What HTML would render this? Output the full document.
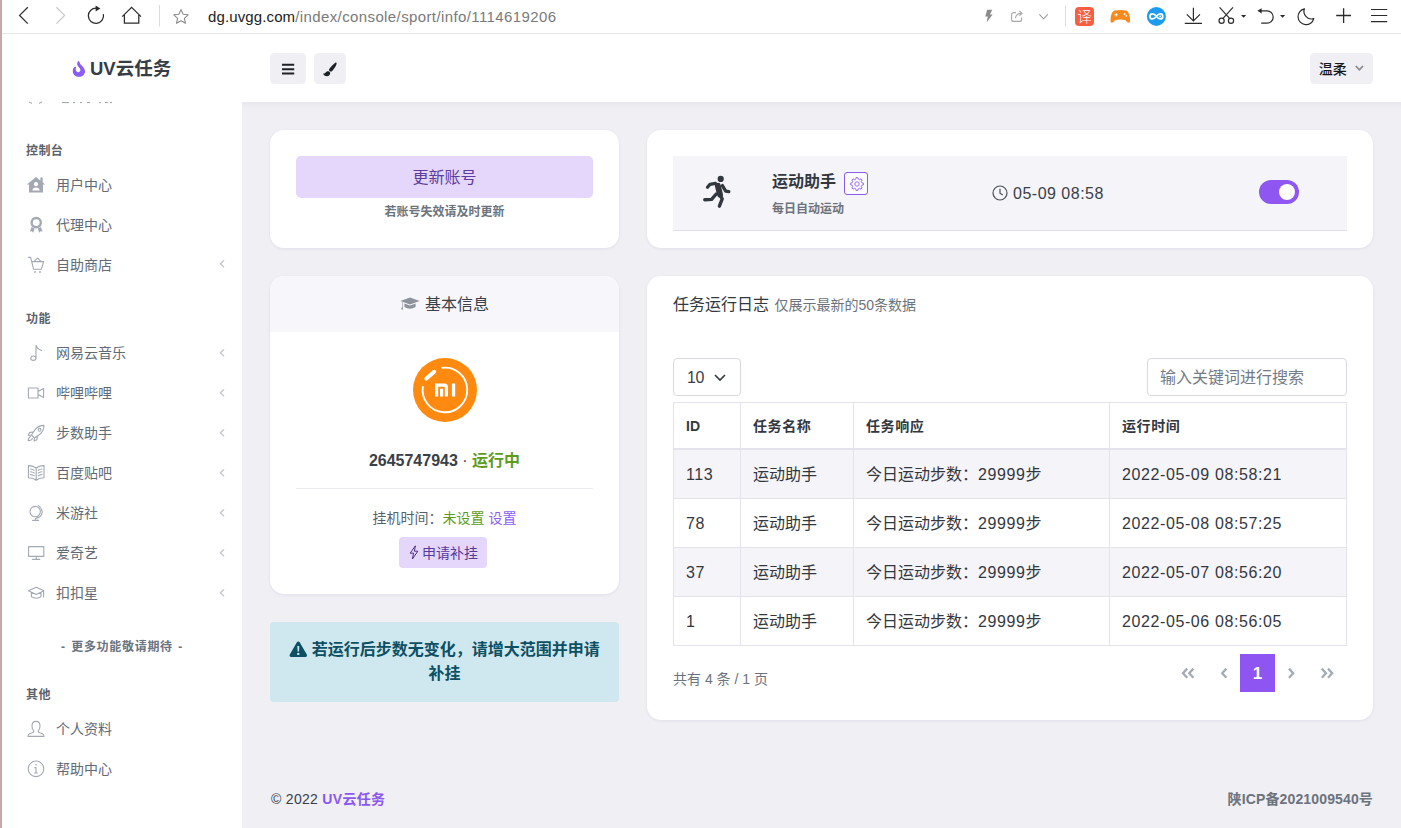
<!DOCTYPE html>
<html lang="zh-CN">
<head>
<meta charset="utf-8">
<title>UV云任务</title>
<style>
*{box-sizing:border-box;margin:0;padding:0}
html,body{width:1401px;height:828px;overflow:hidden;background:#fff}
body{position:relative;font-family:"Liberation Sans","Noto Sans CJK SC",sans-serif;color:#343a40;font-size:14px;line-height:1}
.a{position:absolute;white-space:nowrap}
svg{position:absolute;overflow:visible}
#strip{left:0;top:0;width:2px;height:828px;background:#c9a8a8}
#chrome{left:2px;top:0;width:1399px;height:34px;background:#fff;border-bottom:1px solid #e6e6e6}
#url{left:208px;top:8px;font-size:15px;line-height:18px;color:#7a7a7a;letter-spacing:0}
#url b{font-weight:400;color:#222;letter-spacing:.12px}
#main{left:242px;top:102px;width:1159px;height:726px;background:#f0eff4}
#mainshadow{left:242px;top:102px;width:1159px;height:8px;background:linear-gradient(#e9e8ee,#f0eff4)}
.card{background:#fff;border-radius:14px;box-shadow:0 1px 3px rgba(120,110,160,.12)}
.hbtn{background:#f0eff4;border-radius:4.5px}
.nav{left:56px;font-size:14px;color:#626a76;line-height:20px}
.navh{margin-top:.5px;left:26px;font-size:12px;font-weight:700;color:#5a616b;line-height:16px;letter-spacing:.4px}
.n{letter-spacing:.6px}
</style>
</head>
<body>
<div id="strip" class="a"></div>
<div id="chrome" class="a"></div>
<svg class="a" style="left:0;top:0" width="1401" height="34" viewBox="0 0 1401 34" fill="none" stroke-linecap="butt" stroke-linejoin="miter">
<!-- back -->
<path d="M27.8 7.2 L19.6 15.4 L27.8 23.6" stroke="#2b2b2b" stroke-width="1.25"></path>
<!-- forward -->
<path d="M56.4 7.2 L64.6 15.4 L56.4 23.6" stroke="#c8c8c8" stroke-width="1.25"></path>
<!-- reload -->
<path d="M96.6 8.2 A7.6 7.6 0 1 0 103.4 14.2" stroke="#2b2b2b" stroke-width="1.25"></path>
<path d="M95.6 5.6 L100.4 8.6 L95.6 11.4 Z" fill="#2b2b2b" stroke="none"></path>
<!-- home -->
<path d="M122.2 16.6 L131.6 7.4 L141 16.6 M124.4 15 V23.2 H138.8 V15" stroke="#2b2b2b" stroke-width="1.25"></path>
<!-- sep -->
<path d="M159.5 5 V26.5" stroke="#dcdcdc" stroke-width="1"></path>
<!-- star -->
<path d="M181 9.6 L183.1 14.3 L188.2 14.8 L184.4 18.3 L185.5 23.3 L181 20.7 L176.5 23.3 L177.6 18.3 L173.8 14.8 L178.9 14.3 Z" stroke="#8a8a8a" stroke-width="1.1" stroke-linejoin="round"></path>
<!-- lightning -->
<path d="M987.2 9.8 H992.2 L990 14.4 H992.6 L986.6 22.4 L987.8 16.4 H985.2 Z" fill="#8c8c8c" stroke="none"></path>
<!-- share -->
<path d="M1016 12.6 H1013.6 Q1011.6 12.6 1011.6 14.6 V19.4 Q1011.6 21.4 1013.6 21.4 H1019.6 Q1021.6 21.4 1021.6 19.4 V17.6" stroke="#a8a8a8" stroke-width="1.1"></path>
<path d="M1015.4 18.2 Q1015.8 13.6 1021.6 13.4 M1019.4 11 L1022 13.4 L1019.4 15.8" stroke="#a8a8a8" stroke-width="1.1"></path>
<!-- chevron down -->
<path d="M1039.4 14.4 L1043.6 18.8 L1047.8 14.4" stroke="#9a9a9a" stroke-width="1.1"></path>
<!-- sep -->
<path d="M1065.5 5.2 V26.8" stroke="#dcdcdc" stroke-width="1"></path>
<!-- translate -->
<rect x="1075" y="7" width="19" height="19" rx="4" fill="#f85f42" stroke="none"></rect>
<!-- gamepad -->
<path d="M1114.6 10.6 Q1120.4 9.4 1126 10.6 Q1128.8 11.4 1129.8 17 Q1130.6 22 1129.4 22.6 Q1127.6 23.2 1125.6 20.2 Q1120.4 19 1115 20.2 Q1113 23.2 1111.2 22.6 Q1110 22 1110.8 17 Q1111.8 11.4 1114.6 10.6 Z" fill="#f68a1e" stroke="none"></path>
<circle cx="1124.6" cy="14" r="0.9" fill="#fff" stroke="none"></circle><circle cx="1126.4" cy="15.8" r="0.9" fill="#fff" stroke="none"></circle>
<path d="M1114.6 14.8 H1117.8 M1116.2 13.2 V16.4" stroke="#fff" stroke-width="1"></path>
<!-- blue circle -->
<circle cx="1156.4" cy="16.4" r="9.5" fill="#1c9bf0" stroke="none"></circle>
<path d="M1156.4 16.4 C1154.2 13 1150 13 1150 16.4 C1150 19.8 1154.2 19.8 1156.4 16.4 C1158.6 13 1162.8 13 1162.8 16.4 C1162.8 19.8 1158.6 19.8 1156.4 16.4 Z" stroke="#fff" stroke-width="1.7"></path><circle cx="1160.2" cy="16.4" r="0.9" fill="#fff" stroke="none"></circle>
<!-- download -->
<path d="M1193.4 7.8 V21 M1186.8 14.4 L1193.4 21 L1200 14.4 M1184.8 23.3 H1202" stroke="#2b2b2b" stroke-width="1.2"></path>
<!-- scissors -->
<path d="M1219.6 7.4 L1229.8 18.6 M1233 7.4 L1222.8 18.6" stroke="#2b2b2b" stroke-width="1.2"></path>
<circle cx="1221.6" cy="20.7" r="2.6" stroke="#2b2b2b" stroke-width="1.2"></circle>
<circle cx="1231" cy="20.7" r="2.6" stroke="#2b2b2b" stroke-width="1.2"></circle>
<path d="M1241 15 H1246.2 L1243.6 17.8 Z" fill="#2b2b2b" stroke="none"></path>
<!-- undo -->
<path d="M1260 10.8 H1267 A6.2 6.2 0 0 1 1267 23.2 H1261.2" stroke="#2b2b2b" stroke-width="1.2"></path>
<path d="M1257.4 10.8 L1261.6 8.2 V13.4 Z" fill="#2b2b2b" stroke="none"></path>
<path d="M1280 15 H1285.2 L1282.6 17.8 Z" fill="#2b2b2b" stroke="none"></path>
<!-- moon -->
<path d="M1304.4 8.8 A8 8 0 1 0 1313.8 18.6 A7.6 7.6 0 0 1 1304.4 8.8 Z" stroke="#2b2b2b" stroke-width="1.2" stroke-linejoin="round"></path>
<!-- plus -->
<path d="M1343.6 8.2 V22.9 M1336.2 15.5 H1351" stroke="#2b2b2b" stroke-width="1.3"></path>
<!-- menu -->
<path d="M1371 9.5 H1387.2 M1371 15.5 H1387.2 M1371 21.6 H1387.2" stroke="#2b2b2b" stroke-width="1.2"></path>
</svg>
<div class="a" style="left:1077.2px;top:8.5px;font-size:14.5px;line-height:16px;color:#fff;font-weight:300">译</div>

<div id="url" class="a"><b>dg.uvgg.com</b><span style="letter-spacing:.39px">/index/console/sport/info/1114619206</span></div>

<!-- page header -->
<!-- flame -->
<svg class="a" style="left:72px;top:60px" width="14" height="18" viewBox="0 0 14 18"><path d="M6.6 1 C7.6 1 7.4 3 8.6 4.4 C10 6 13 8 13 11.2 C13 14.4 10.4 16.8 7 16.8 C3.4 16.8 0.8 14.4 0.8 11.2 C0.8 9 1.8 7.4 2.8 6.8 C3.6 6.4 4.2 6.8 4 7.6 C3.6 9 3.6 10 4.2 11 C4.8 12 5.8 12.4 6.6 12.2 C7.8 12 8.6 11 8.4 9.8 C8.2 8.4 6.6 7.4 5.6 5.6 C4.8 4 5.4 1 6.6 1 Z" fill="#8b5cf6"></path></svg>
<div class="a" style="left:90px;top:58px;font-size:18.5px;line-height:22px;font-weight:700;color:#373d45;letter-spacing:0">UV云任务</div>
<div class="a hbtn" style="left:270px;top:53px;width:36px;height:31px"></div>
<svg class="a" style="left:282px;top:62.5px" width="13" height="12" viewBox="0 0 13 12"><path d="M0 1.7 H12.2 M0 6.2 H12.2 M0 10.6 H12.2" stroke="#1f2328" stroke-width="2" fill="none"></path></svg>
<div class="a hbtn" style="left:314px;top:53px;width:32px;height:31px"></div>
<svg class="a" style="left:323px;top:61.5px" width="14" height="15" viewBox="0 0 14 15"><path d="M13.2 0.6 C14 1.2 13.6 2.6 12.8 4 C11.6 6 10 8.4 8.6 9.4 C8 9.8 7.2 9.6 6.6 9 C6 8.4 5.8 7.6 6.2 7 C7.2 5.4 9.6 3 11.4 1.4 C12.2 0.6 12.8 0.2 13.2 0.6 Z M5.4 9.2 C6.6 9.4 7.4 10.4 7.2 11.6 C7 13.2 5.6 14.2 3.8 14.2 C2 14.2 0.6 13.2 0.2 11.4 C1 11.8 2 11.6 2.4 10.8 C3 9.6 4.2 9 5.4 9.2 Z" fill="#1f2328"></path></svg>
<div class="a hbtn" style="left:1310px;top:53px;width:63px;height:31px"></div>
<div class="a" style="left:1318.8px;top:60px;font-size:14px;line-height:18px;font-weight:500;color:#16181b">温柔</div>
<svg class="a" style="left:1355.3px;top:65.2px" width="9" height="7" viewBox="0 0 9 7"><path d="M0.8 1 L4.4 4.8 L8 1" stroke="#8a8a8c" stroke-width="1.8" fill="none"></path></svg>


<!-- sidebar -->
<svg class="a" style="left:28px;top:101px" width="90" height="4" viewBox="0 0 90 4"><path d="M1 1 L4 2.4 M11 2.4 L14 1 M34 1.6 H41 M45 1.6 H47 M52 1.6 H54 M59 1.6 H62 M71 1.6 H73 M77 1.6 H80 M82 1.6 H84" stroke="#9aa0aa" stroke-width="1" fill="none"></path></svg>
<div class="a navh" style="top:142.5px">控制台</div>
<div class="a nav" style="top:175px">用户中心</div>
<div class="a nav" style="top:215px">代理中心</div>
<div class="a nav" style="top:255px">自助商店</div>
<svg class="a" style="left:219px;top:259.3px" width="6" height="10" viewBox="0 0 6 10"><path d="M5 1.2 L1.4 4.7 L5 8.2" stroke="#c3c7cd" stroke-width="1.3" fill="none"></path></svg>
<div class="a navh" style="top:310px">功能</div>
<div class="a nav" style="top:342.5px">网易云音乐</div>
<svg class="a" style="left:219px;top:348.0px" width="6" height="10" viewBox="0 0 6 10"><path d="M5 1.2 L1.4 4.7 L5 8.2" stroke="#c3c7cd" stroke-width="1.3" fill="none"></path></svg>
<div class="a nav" style="top:382.5px">哔哩哔哩</div>
<svg class="a" style="left:219px;top:388.0px" width="6" height="10" viewBox="0 0 6 10"><path d="M5 1.2 L1.4 4.7 L5 8.2" stroke="#c3c7cd" stroke-width="1.3" fill="none"></path></svg>
<div class="a nav" style="top:422.5px">步数助手</div>
<svg class="a" style="left:219px;top:428.0px" width="6" height="10" viewBox="0 0 6 10"><path d="M5 1.2 L1.4 4.7 L5 8.2" stroke="#c3c7cd" stroke-width="1.3" fill="none"></path></svg>
<div class="a nav" style="top:462.5px">百度贴吧</div>
<svg class="a" style="left:219px;top:468.0px" width="6" height="10" viewBox="0 0 6 10"><path d="M5 1.2 L1.4 4.7 L5 8.2" stroke="#c3c7cd" stroke-width="1.3" fill="none"></path></svg>
<div class="a nav" style="top:502.5px">米游社</div>
<svg class="a" style="left:219px;top:508.0px" width="6" height="10" viewBox="0 0 6 10"><path d="M5 1.2 L1.4 4.7 L5 8.2" stroke="#c3c7cd" stroke-width="1.3" fill="none"></path></svg>
<div class="a nav" style="top:542.5px">爱奇艺</div>
<svg class="a" style="left:219px;top:548.0px" width="6" height="10" viewBox="0 0 6 10"><path d="M5 1.2 L1.4 4.7 L5 8.2" stroke="#c3c7cd" stroke-width="1.3" fill="none"></path></svg>
<div class="a nav" style="top:582.5px">扣扣星</div>
<svg class="a" style="left:219px;top:588.0px" width="6" height="10" viewBox="0 0 6 10"><path d="M5 1.2 L1.4 4.7 L5 8.2" stroke="#c3c7cd" stroke-width="1.3" fill="none"></path></svg>
<div class="a" style="left:2px;width:240px;top:638.5px;text-align:center;font-size:12px;font-weight:700;color:#6a7380;line-height:16px;letter-spacing:.7px;word-spacing:1.5px">- 更多功能敬请期待 -</div>
<div class="a navh" style="top:686.5px">其他</div>
<div class="a nav" style="top:719px">个人资料</div>
<div class="a nav" style="top:759px">帮助中心</div>

<svg class="a" style="left:0;top:0" width="242" height="828" viewBox="0 0 242 828">
<!-- house-user -->
<path d="M36 177 L45.2 184.6 H43 V192.4 H29 V184.6 H26.8 Z M40.4 177.6 H42.7 V183 L40.4 181 Z" fill="#a3a9b3"></path>
<circle cx="36" cy="184.2" r="2.1" fill="#fff"></circle><path d="M32.4 190.6 Q32.4 187.4 36 187.4 Q39.6 187.4 39.6 190.6 Z" fill="#fff"></path>
<!-- award -->
<circle cx="36.2" cy="222.6" r="4.6" stroke="#a3a9b3" stroke-width="2.4" fill="none"></circle>
<path d="M31.6 227 L34.6 228.6 L33.2 232.8 L31.8 231.2 L29.8 231.6 Z M40.8 227 L37.8 228.6 L39.2 232.8 L40.6 231.2 L42.6 231.6 Z" fill="#a3a9b3"></path>
<!-- cart -->
<path d="M28.4 257.4 H30.6 L33.6 269.2 H41.4 L43.6 261.6 H31.8 M34.2 261.4 L37.6 258.2 L41 261.4" stroke="#a3a9b3" stroke-width="1.1" fill="none" stroke-linejoin="round" stroke-linecap="round"></path>
<circle cx="35" cy="272" r="0.9" fill="#a3a9b3"></circle><circle cx="40" cy="272" r="0.9" fill="#a3a9b3"></circle>
<!-- music -->
<path d="M36 356.6 V345.2 Q37 349 41.6 350.6" stroke="#a3a9b3" stroke-width="1.1" fill="none" stroke-linejoin="round" stroke-linecap="round"></path><ellipse cx="33.4" cy="358.2" rx="2.6" ry="2.2" stroke="#a3a9b3" stroke-width="1.1" fill="none" stroke-linejoin="round" stroke-linecap="round"></ellipse>
<!-- video -->
<path d="M28.4 388 H38 V398 H28.4 Z M38 391.6 L43.6 388.6 V397.4 L38 394.4" stroke="#a3a9b3" stroke-width="1.1" fill="none" stroke-linejoin="round" stroke-linecap="round"></path>
<!-- rocket -->
<path d="M44 425.4 Q38 425.4 34.4 430.6 L31.4 435 L34.4 438 L38.8 435 Q44 431.4 44 425.4 Z M33.6 431.8 L29.6 432.6 L28.2 435.2 L31.4 435 M37.6 435.8 L36.8 439.8 L34.2 441 L34.4 438 M30.6 436.6 Q28.4 437.4 28.2 440.8 Q31.6 440.6 32.4 438.6" stroke="#a3a9b3" stroke-width="1.1" fill="none" stroke-linejoin="round" stroke-linecap="round"></path>
<circle cx="39.6" cy="429.8" r="1.4" stroke="#a3a9b3" stroke-width="1.1" fill="none" stroke-linejoin="round" stroke-linecap="round"></circle>
<!-- book -->
<path d="M36.2 468 Q32.6 465.6 28.4 465.6 V477.8 Q32.6 477.8 36.2 480.2 Q39.8 477.8 44 477.8 V465.6 Q39.8 465.6 36.2 468 Z M36.2 468 V480.2 M30.4 469 Q32.6 469.2 34.2 470.2 M30.4 471.8 Q32.6 472 34.2 473 M30.4 474.6 Q32.6 474.8 34.2 475.8 M42 469 Q39.8 469.2 38.2 470.2 M42 471.8 Q39.8 472 38.2 473 M42 474.6 Q39.8 474.8 38.2 475.8" stroke="#a3a9b3" stroke-width="1.1" fill="none" stroke-linejoin="round" stroke-linecap="round"></path>
<!-- globe -->
<circle cx="35.2" cy="511.6" r="5.2" stroke="#a3a9b3" stroke-width="1.1" fill="none" stroke-linejoin="round" stroke-linecap="round"></circle><path d="M38.4 505.6 Q42.4 508.4 42.2 512.6 Q41.6 517.2 35.6 518.4 M35.6 518.4 V520.4 M32.6 520.4 H38.6" stroke="#a3a9b3" stroke-width="1.1" fill="none" stroke-linejoin="round" stroke-linecap="round"></path>
<!-- monitor -->
<path d="M28.6 546.6 H43.8 V556.4 H28.6 Z M36.2 556.4 V559.2 M32.6 559.4 H39.8" stroke="#a3a9b3" stroke-width="1.1" fill="none" stroke-linejoin="round" stroke-linecap="round"></path>
<!-- grad cap -->
<path d="M28.4 590.8 L36.2 587.2 L44 590.8 L36.2 594.4 Z M31.4 592.4 V596.8 Q36.2 599.6 41 596.8 V592.4 M43.6 591.2 V597" stroke="#a3a9b3" stroke-width="1.1" fill="none" stroke-linejoin="round" stroke-linecap="round"></path>
<!-- user -->
<path d="M36 721.4 Q40 721.4 40 726 Q40 729.2 38.2 730.8 Q38 732.4 40.4 733 Q44 733.8 44 736.4 H28 Q28 733.8 31.6 733 Q34 732.4 33.8 730.8 Q32 729.2 32 726 Q32 721.4 36 721.4 Z" stroke="#a3a9b3" stroke-width="1.1" fill="none" stroke-linejoin="round" stroke-linecap="round"></path>
<!-- info -->
<circle cx="36" cy="768.8" r="7.8" stroke="#a3a9b3" stroke-width="1.1" fill="none" stroke-linejoin="round" stroke-linecap="round"></circle><path d="M36 767.6 V773 M34.6 773 H37.4 M34.8 767.6 H36" stroke="#a3a9b3" stroke-width="1.1" fill="none" stroke-linejoin="round" stroke-linecap="round"></path><circle cx="36" cy="764.8" r="0.8" fill="#a3a9b3"></circle>
</svg>

<div id="main" class="a"></div>
<div id="mainshadow" class="a"></div>

<!-- left card 1 -->
<div class="a card" style="left:270px;top:130px;width:349px;height:118px"></div>
<div class="a" style="left:296px;top:156px;width:297px;height:42px;background:#e5d6fb;border-radius:5px;text-align:center;font-size:16px;line-height:44px;color:#5a3c9c">更新账号</div>
<div class="a" style="left:296px;top:204px;width:297px;text-align:center;font-size:12px;line-height:16px;font-weight:700;color:#6c737c">若账号失效请及时更新</div>

<!-- left card 2 -->
<div class="a card" style="left:270px;top:276px;width:349px;height:318px;overflow:hidden"><div style="height:56px;background:#f7f6fa"></div></div>
<svg class="a" style="left:400px;top:297px" width="20" height="14" viewBox="0 0 20 14"><path d="M10 0.6 L19.6 4 L10 7.4 L0.4 4 Z" fill="#8d939c"></path><path d="M4.4 6.6 V10 Q10 13.4 15.6 10 V6.6 L10 8.6 Z" fill="#8d939c"></path><path d="M2 5 V9.4 L1.2 12.4 H3.2 L2.6 9.4 V5.2" fill="#8d939c"></path></svg>
<div class="a" style="left:425px;top:294.7px;font-size:16px;line-height:20px;color:#3a4048">基本信息</div>
<!-- mi logo -->
<div class="a" style="left:413px;top:358px;width:64px;height:64px;border-radius:50%;background:#ff8a0f"></div>
<svg class="a" style="left:413px;top:358px" width="64" height="64" viewBox="0 0 64 64"><path d="M28.7 9.9 A22.3 22.3 0 1 1 9.9 28.2" stroke="#fff" stroke-width="1.9" fill="none"></path><path d="M13.4 20.6 L21.2 13.8" stroke="#fff" stroke-width="4" stroke-linecap="round"></path><path d="M22 38.4 V25.6 H31.5 Q35 25.6 35 29.1 V38.4 H31.8 V29.6 Q31.8 28.8 31 28.8 H25.2 V38.4 Z M27 30.8 H30.2 V38.4 H27 Z M38.9 25.6 H42.2 V38.4 H38.9 Z" fill="#fff"></path></svg>
<div class="a" style="left:270px;top:451px;width:349px;text-align:center;font-size:16px;line-height:20px;font-weight:700;color:#3a4048">2645747943 <span style="font-weight:400">·</span> <span style="color:#5d9c1c">运行中</span></div>
<div class="a" style="left:296px;top:488px;width:297px;height:1px;background:#ebebef"></div>
<div class="a" style="left:270px;top:508px;width:349px;text-align:center;font-size:14px;line-height:20px;color:#5a616b">挂机时间：<span style="color:#5d9c1c">未设置</span> <span style="color:#8b5cf6">设置</span></div>
<div class="a" style="left:399px;top:537px;width:88px;height:31px;background:#e5d6fb;border-radius:4px"></div>
<svg class="a" style="left:409px;top:545px" width="10" height="15" viewBox="0 0 10 15"><path d="M6.4 0.8 L1.2 8.2 H4.6 L3.4 14 L8.8 6.2 H5.4 Z" stroke="#4a2f8a" stroke-width="1" fill="none" stroke-linejoin="round"></path></svg>
<div class="a" style="left:422px;top:542.5px;font-size:14px;line-height:20px;color:#553a9a">申请补挂</div>

<!-- alert -->
<div class="a" style="left:270px;top:622px;width:349px;height:80px;background:#cfe8ef;border-radius:4px"></div>
<div class="a" style="left:270px;top:638px;width:349px;text-align:center;font-size:16px;line-height:24px;font-weight:700;color:#0d4f63;white-space:normal;padding:0 18px"><svg style="position:relative;display:inline-block;vertical-align:-2.5px;margin-right:4px" width="18.6" height="16.4" viewBox="0 0 17 15"><path d="M8.5 0.4 Q9.4 0.4 9.9 1.3 L16.4 12.6 Q17 14.4 15.2 14.6 H1.8 Q0 14.4 0.6 12.6 L7.1 1.3 Q7.6 0.4 8.5 0.4 Z" fill="#0d4f63"></path><path d="M7.6 4.6 H9.4 L9.1 9.6 H7.9 Z" fill="#cfe8ef"></path><circle cx="8.5" cy="11.8" r="1.1" fill="#cfe8ef"></circle></svg><span style="white-space:nowrap">若运行后步数无变化，请增大范围并申请</span><br>补挂</div>

<!-- right card 1 -->
<div class="a card" style="left:647px;top:130px;width:726px;height:118px"></div>
<div class="a" style="left:673px;top:156px;width:674px;height:75px;background:#f5f4f8;border-bottom:1px solid #e2e0ea"></div>
<!-- runner -->
<svg class="a" style="left:703px;top:175px" width="27" height="34" viewBox="0 0 27 34" fill="none" stroke="#33383f" stroke-linecap="round" stroke-linejoin="round"><circle cx="17.7" cy="3.9" r="3.1" fill="#33383f" stroke="none"></circle><path d="M14.9 10.9 L17 19.6" stroke-width="6"></path><path d="M12.4 8.4 L7 9.3 L4.5 12.3" stroke-width="3.3"></path><path d="M19.4 10.6 L22.7 16.2 L25.8 16.7" stroke-width="3.3"></path><path d="M17.2 20.4 L19.2 23.8 L16.4 31.2" stroke-width="3.4"></path><path d="M13.2 19 L8.6 24.4 L1.8 24.7" stroke-width="3.4"></path></svg>
<div class="a" style="left:772px;top:172px;font-size:16px;line-height:20px;font-weight:700;color:#33383f">运动助手</div>
<div class="a" style="left:844px;top:172px;width:24px;height:23px;border:1px solid #8b5cf0;border-radius:3px;background:#fbfbfd"></div>
<svg class="a" style="left:849.9px;top:176.6px" width="14" height="14" viewBox="0 0 14 14"><circle cx="7" cy="7" r="2.2" stroke="#8b5cf0" stroke-width=".9" fill="none"></circle><path d="M5.81 2.14 L6.16 0.55 L7.84 0.55 L8.19 2.14 L9.59 2.73 L10.96 1.85 L12.15 3.04 L11.27 4.41 L11.86 5.81 L13.45 6.16 L13.45 7.84 L11.86 8.19 L11.27 9.59 L12.15 10.96 L10.96 12.15 L9.59 11.27 L8.19 11.86 L7.84 13.45 L6.16 13.45 L5.81 11.86 L4.41 11.27 L3.04 12.15 L1.85 10.96 L2.73 9.59 L2.14 8.19 L0.55 7.84 L0.55 6.16 L2.14 5.81 L2.73 4.41 L1.85 3.04 L3.04 1.85 L4.41 2.73 Z" stroke="#8b5cf0" stroke-width=".9" fill="none" stroke-linejoin="round"></path></svg>
<div class="a" style="left:772px;top:201px;font-size:12px;line-height:16px;font-weight:700;color:#6c737c">每日自动运动</div>
<svg class="a" style="left:992px;top:185px" width="16" height="16" viewBox="0 0 16 16"><circle cx="8" cy="8" r="7" stroke="#4a5058" stroke-width="1.2" fill="none"></circle><path d="M8 3.8 V8.2 L10.8 10" stroke="#4a5058" stroke-width="1.2" fill="none"></path></svg>
<div class="a" style="left:1013px;top:184px;font-size:16px;line-height:20px;color:#3a4048;letter-spacing:.5px">05-09 08:58</div>
<div class="a" style="left:1259px;top:180px;width:40px;height:24px;border-radius:12px;background:#8f56f2"></div>
<div class="a" style="left:1278.8px;top:183.8px;width:16.4px;height:16.4px;border-radius:50%;background:#fff"></div>

<!-- right card 2 -->
<div class="a card" style="left:647px;top:276px;width:726px;height:444px"></div>
<div class="a" style="left:673px;top:295px;font-size:16px;line-height:20px;color:#33383f">任务运行日志 <span style="font-size:14px;color:#6c737c;margin-left:1px">仅展示最新的50条数据</span></div>
<div class="a" style="left:673px;top:358px;width:68px;height:38px;border:1px solid #dad8e2;border-radius:4px"></div>
<div class="a" style="left:687px;top:368px;font-size:16px;line-height:20px;color:#3a4048;letter-spacing:-.3px">10</div>
<svg class="a" style="left:714px;top:373.6px" width="12" height="8" viewBox="0 0 12 8"><path d="M1 1 L6 6 L11 1" stroke="#33383f" stroke-width="1.6" fill="none"></path></svg>
<div class="a" style="left:1147px;top:358px;width:200px;height:38px;border:1px solid #dad8e2;border-radius:4px"></div>
<div class="a" style="left:1160px;top:368px;font-size:16px;line-height:20px;color:#737b87">输入关键词进行搜索</div>
<div class="a" style="left:673px;top:402px;width:674px;height:244px;border:1px solid #e4e2ec"></div>
<div class="a" style="left:674px;top:450px;width:672px;height:48px;background:#f5f4f8"></div>
<div class="a" style="left:674px;top:548px;width:672px;height:48px;background:#f5f4f8"></div>
<div class="a" style="left:673px;top:448px;width:674px;height:2px;background:#e4e2ec"></div>
<div class="a" style="left:673px;top:498px;width:674px;height:1px;background:#e4e2ec"></div>
<div class="a" style="left:673px;top:547px;width:674px;height:1px;background:#e4e2ec"></div>
<div class="a" style="left:673px;top:596px;width:674px;height:1px;background:#e4e2ec"></div>
<div class="a" style="left:740px;top:402px;width:1px;height:244px;background:#e4e2ec"></div>
<div class="a" style="left:853px;top:402px;width:1px;height:244px;background:#e4e2ec"></div>
<div class="a" style="left:1109px;top:402px;width:1px;height:244px;background:#e4e2ec"></div>
<div class="a" style="left:686px;top:416px;font-size:14px;line-height:20px;font-weight:700;color:#33383f">ID</div>
<div class="a" style="left:753px;top:416px;font-size:14px;line-height:20px;font-weight:700;color:#33383f;letter-spacing:.6px">任务名称</div>
<div class="a" style="left:866px;top:416px;font-size:14px;line-height:20px;font-weight:700;color:#33383f;letter-spacing:.6px">任务响应</div>
<div class="a" style="left:1122px;top:416px;font-size:14px;line-height:20px;font-weight:700;color:#33383f;letter-spacing:.6px">运行时间</div>
<div class="a" style="left:686px;top:465px;font-size:16px;line-height:20px;color:#33383f"><span class="n">113</span></div>
<div class="a" style="left:753px;top:465px;font-size:16px;line-height:20px;color:#33383f">运动助手</div>
<div class="a" style="left:866px;top:465px;font-size:16px;line-height:20px;color:#33383f">今日运动步数：<span class="n">29999</span>步</div>
<div class="a" style="left:1122px;top:465px;font-size:16px;line-height:20px;color:#33383f"><span class="n">2022-05-09 08:58:21</span></div>
<div class="a" style="left:686px;top:514px;font-size:16px;line-height:20px;color:#33383f"><span class="n">78</span></div>
<div class="a" style="left:753px;top:514px;font-size:16px;line-height:20px;color:#33383f">运动助手</div>
<div class="a" style="left:866px;top:514px;font-size:16px;line-height:20px;color:#33383f">今日运动步数：<span class="n">29999</span>步</div>
<div class="a" style="left:1122px;top:514px;font-size:16px;line-height:20px;color:#33383f"><span class="n">2022-05-08 08:57:25</span></div>
<div class="a" style="left:686px;top:563px;font-size:16px;line-height:20px;color:#33383f"><span class="n">37</span></div>
<div class="a" style="left:753px;top:563px;font-size:16px;line-height:20px;color:#33383f">运动助手</div>
<div class="a" style="left:866px;top:563px;font-size:16px;line-height:20px;color:#33383f">今日运动步数：<span class="n">29999</span>步</div>
<div class="a" style="left:1122px;top:563px;font-size:16px;line-height:20px;color:#33383f"><span class="n">2022-05-07 08:56:20</span></div>
<div class="a" style="left:686px;top:612px;font-size:16px;line-height:20px;color:#33383f"><span class="n">1</span></div>
<div class="a" style="left:753px;top:612px;font-size:16px;line-height:20px;color:#33383f">运动助手</div>
<div class="a" style="left:866px;top:612px;font-size:16px;line-height:20px;color:#33383f">今日运动步数：<span class="n">29999</span>步</div>
<div class="a" style="left:1122px;top:612px;font-size:16px;line-height:20px;color:#33383f"><span class="n">2022-05-06 08:56:05</span></div>
<div class="a" style="left:673px;top:669px;font-size:14px;line-height:20px;color:#6c737c">共有 4 条 / 1 页</div>
<div class="a" style="left:1240px;top:654px;width:35px;height:38px;background:#8f55f2;color:#fff;font-weight:700;font-size:17px;line-height:40px;text-align:center">1</div>
<svg class="a" style="left:1180px;top:666px" width="160" height="14" viewBox="0 0 160 14"><path d="M7.2 2.6 L3 7.2 L7.2 11.8 M13.4 2.6 L9.2 7.2 L13.4 11.8" stroke="#a4abb6" stroke-width="2.3" fill="none"></path><path d="M46.4 2.6 L42.2 7.2 L46.4 11.8" stroke="#a4abb6" stroke-width="2.3" fill="none"></path><path d="M109 2.6 L113.2 7.2 L109 11.8" stroke="#a4abb6" stroke-width="2.3" fill="none"></path><path d="M141.8 2.6 L146 7.2 L141.8 11.8 M148 2.6 L152.2 7.2 L148 11.8" stroke="#a4abb6" stroke-width="2.3" fill="none"></path></svg>
<div class="a" style="left:271px;top:789px;font-size:14px;line-height:20px;color:#3a4048;letter-spacing:.3px">© 2022 <span style="color:#8a58f0;font-weight:700">UV云任务</span></div>
<div class="a" style="right:28px;top:789px;font-size:14px;line-height:20px;font-weight:700;color:#6c737c;letter-spacing:.14px">陕ICP备2021009540号</div>
</body>
</html>
